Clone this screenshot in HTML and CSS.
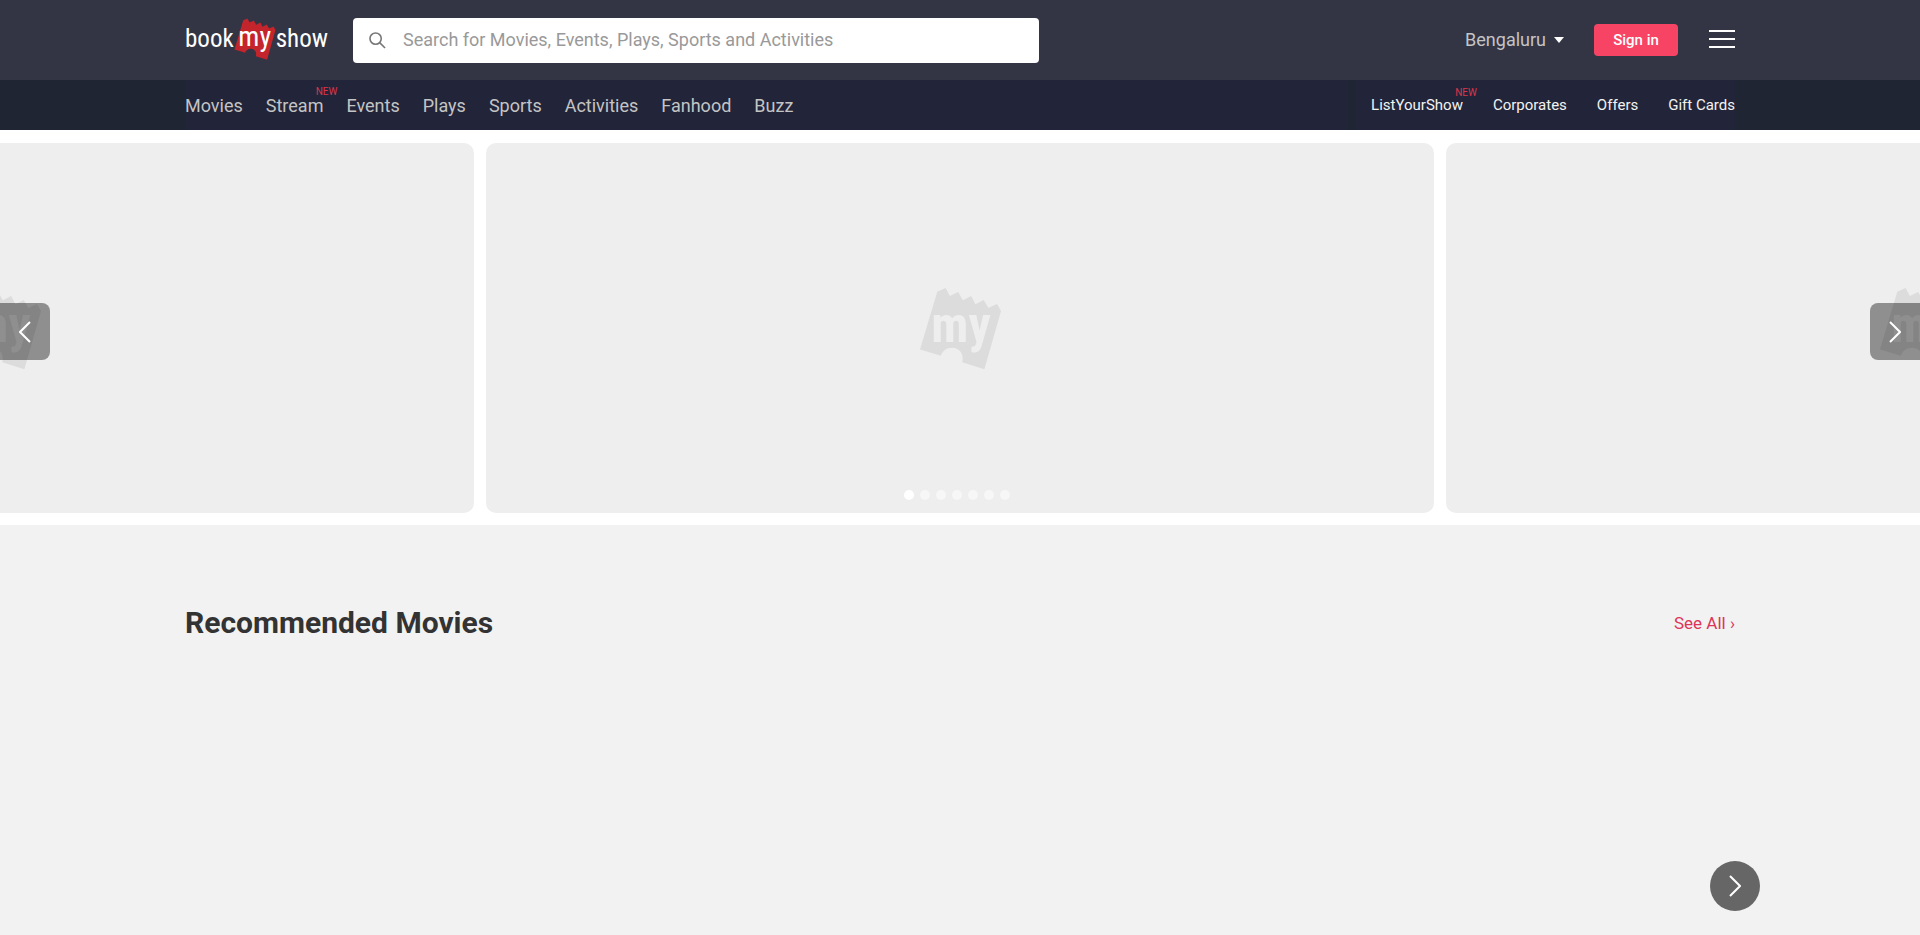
FILE: index.html
```
<!DOCTYPE html>
<html lang="en">
<head>
<meta charset="utf-8">
<title>BookMyShow</title>
<link rel="stylesheet" href="styles.css">
</head>
<body>
<svg class="defs" aria-hidden="true">
  <symbol id="ticket" viewBox="0 0 250 250">
    <path d="M55 14 80 3 93 27 118 15 132 40 157 27 170 52 195 39 209 63 235 51 247 72 197 248 130 227C137 203 122 183 100 183 82 183 70 193 66 207L3 188Z"/>
  </symbol>
</svg>
<header class="header">
  <div class="container header-row">
    <a class="logo" href="#" aria-label="bookmyshow">
      <span class="logo-word">book</span>
      <span class="mark mark-small"><svg><use href="#ticket"/></svg><span class="mark-text">my</span></span>
      <span class="logo-word">show</span>
    </a>
    <label class="search">
      <svg class="search-icon" viewBox="0 0 18 18" aria-hidden="true"><circle cx="7" cy="7" r="6"/><path d="M11.3 11.3 17 17"/></svg>
      <input type="search" aria-label="Search" placeholder="Search for Movies, Events, Plays, Sports and Activities">
    </label>
    <div class="actions">
      <button class="city" type="button">Bengaluru<span class="caret"></span></button>
      <button class="signin" type="button">Sign in</button>
      <button class="menu" type="button" aria-label="Menu"><span></span><span></span><span></span></button>
    </div>
  </div>
</header>
<nav class="nav">
  <div class="container nav-row">
    <div class="nav-main">
      <a href="#">Movies</a>
      <a href="#">Stream<sup class="new">NEW</sup></a>
      <a href="#">Events</a>
      <a href="#">Plays</a>
      <a href="#">Sports</a>
      <a href="#">Activities</a>
      <a href="#">Fanhood</a>
      <a href="#">Buzz</a>
    </div>
    <div class="nav-side">
      <a href="#">ListYourShow<sup class="new">NEW</sup></a>
      <a href="#">Corporates</a>
      <a href="#">Offers</a>
      <a href="#">Gift Cards</a>
    </div>
  </div>
</nav>
<section class="carousel" aria-label="Highlights">
  <div class="track">
    <div class="slide"><span class="mark"><svg><use href="#ticket"/></svg><span class="mark-text">my</span></span></div>
    <div class="slide"><span class="mark"><svg><use href="#ticket"/></svg><span class="mark-text">my</span></span></div>
    <div class="slide"><span class="mark"><svg><use href="#ticket"/></svg><span class="mark-text">my</span></span></div>
  </div>
  <button class="arrow prev" type="button" aria-label="Previous"><svg viewBox="0 0 12 22"><path d="M11 1 1 11 11 21"/></svg></button>
  <button class="arrow next" type="button" aria-label="Next"><svg viewBox="0 0 12 22"><path d="M1 1 11 11 1 21"/></svg></button>
  <div class="dots"><span class="on"></span><span></span><span></span><span></span><span></span><span></span><span></span></div>
</section>
<main class="main">
  <section class="container recommended">
    <div class="heading">
      <h2>Recommended Movies</h2>
      <a href="#">See All ›</a>
    </div>
    <button class="round" type="button" aria-label="Next movies"><svg viewBox="0 0 12 22"><path d="M1 1 11 11 1 21"/></svg></button>
  </section>
</main>
</body>
</html>
```
FILE: styles.css
```
* { box-sizing: border-box; }
body {
  margin: 0;
  min-height: 100vh;
  display: flex;
  flex-direction: column;
  overflow-x: hidden;
  background: #fff;
  font-family: Roboto, "Liberation Sans", sans-serif;
}
a { color: inherit; text-decoration: none; }
button { border: 0; padding: 0; font-family: inherit; cursor: pointer; }
.defs { position: absolute; width: 0; height: 0; }
.container { width: 100%; max-width: 1598px; margin: 0 auto; padding: 0 24px; }

.header { background: #333545; }
.header-row { display: flex; align-items: center; height: 80px; }
.logo { display: flex; align-items: center; width: 144px; padding-bottom: 2px; color: #fff; }
.logo-word { font: 25px/40px "Liberation Sans Narrow", "Roboto Condensed", Roboto, sans-serif; }
.mark { position: relative; display: inline-block; width: 83px; height: 83px; flex: none; color: #eee; fill: #dcdcdc; }
.mark svg { display: block; width: 100%; height: 100%; }
.mark-text {
  position: absolute;
  inset: 0 0 6px 2px;
  display: flex;
  align-items: center;
  justify-content: center;
  font: bold 50px/1 "Liberation Sans Narrow", "Roboto Condensed", Roboto, sans-serif;
}
.mark-small { width: 42px; height: 42px; color: #fff; fill: #c4242b; }
.mark-small .mark-text { inset: 0 0 4px 0; font-size: 28px; font-weight: 400; }
.search {
  display: flex;
  align-items: center;
  gap: 17px;
  flex: 0 1 686px;
  height: 45px;
  margin-left: 24px;
  padding: 0 16px;
  background: #fff;
  border-radius: 4px;
}
.search-icon { width: 17px; height: 17px; flex: none; fill: none; stroke: #777; stroke-width: 1.7; }
.search input { flex: 1; min-width: 0; border: 0; outline: 0; padding: 0; background: none; font: 18px/24px Roboto, sans-serif; color: #333; }
.search input::placeholder { color: #999; opacity: 1; }
.actions { display: flex; align-items: center; margin-left: auto; }
.city { display: flex; align-items: center; gap: 8px; background: none; color: #c4c4c4; font-size: 18px; line-height: 24px; }
.caret { border: 5px solid transparent; border-top: 6px solid #fff; border-bottom: 0; }
.signin { width: 84px; height: 32px; margin-left: 30px; border-radius: 4px; background: #f84464; color: #fff; font-size: 15px; font-weight: 500; }
.menu { display: flex; flex-direction: column; gap: 6px; width: 26px; margin-left: 31px; padding-bottom: 3px; background: none; }
.menu span { height: 2px; background: #fff; }

.nav { background: #1f2533; }
.nav-row { display: flex; gap: 8px; height: 50px; }
.nav-main, .nav-side { display: flex; align-items: center; background: #222539; }
.nav-main { flex: 1; gap: 23px; color: #c4c4c4; font-size: 18px; }
.nav-side { gap: 30px; padding-left: 15px; color: #f2f2f2; font-size: 15px; }
.nav-row a { position: relative; }
.new { position: absolute; right: -14px; top: -9px; color: #dc354b; font-size: 10px; line-height: 12px; }

.carousel { position: relative; padding: 13px 0 12px; overflow: hidden; }
.track { display: flex; margin: 0 -25%; }
.slide { flex: 1; display: flex; align-items: center; justify-content: center; height: 370px; margin: 0 6px; border-radius: 10px; background: #eee; }
.arrow { position: absolute; top: 173px; width: 50px; height: 57px; background: rgba(0, 0, 0, .4); }
.arrow svg, .round svg { width: 12px; height: 22px; fill: none; stroke: #fff; stroke-width: 2; vertical-align: middle; }
.prev { left: 0; border-radius: 0 8px 8px 0; }
.next { right: 0; border-radius: 8px 0 0 8px; }
.dots { position: absolute; left: 0; right: 6px; bottom: 25px; display: flex; justify-content: center; gap: 6px; }
.dots span { width: 10px; height: 10px; border-radius: 50%; background: #f7f7f7; }
.dots .on { background: #fff; }

.main { flex: 1; display: flex; background: #f2f2f2; }
.recommended { position: relative; padding-top: 80px; }
.heading { display: flex; align-items: center; justify-content: space-between; height: 36px; }
.heading h2 { margin: 0; color: #333; font-size: 30px; line-height: 36px; font-weight: 700; }
.heading a { color: #dc3558; font-size: 17px; line-height: 24px; }
.round { position: absolute; right: -1px; bottom: 24px; width: 50px; height: 50px; border-radius: 50%; background: #666; }
```
